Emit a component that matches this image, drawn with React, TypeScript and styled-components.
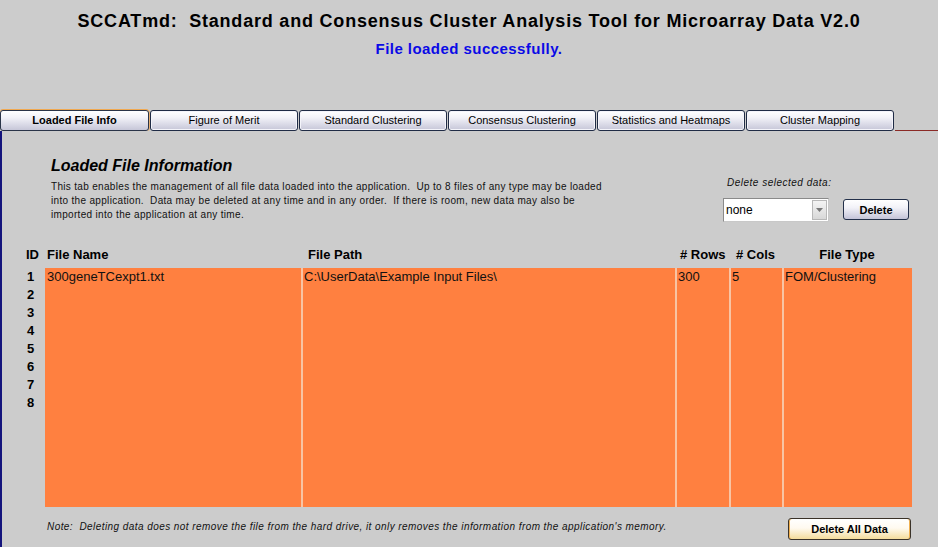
import React from "react";
import styled, { createGlobalStyle } from "styled-components";

const Global = createGlobalStyle`
  html, body { margin: 0; padding: 0; background: #cccccc; }
  body { font-family: "Liberation Sans", Arial, sans-serif; color: #000; }
  * { box-sizing: border-box; }
`;

const Page = styled.div`
  width: 938px;
  height: 547px;
  overflow: hidden;
  display: flex;
  flex-direction: column;
  background: #cccccc;
`;

const Header = styled.header`
  display: flex;
  flex-direction: column;
  align-items: center;
  padding-top: 10px;
  height: 110px;
`;

const Title = styled.h1`
  margin: 0;
  font-size: 18px;
  line-height: 22px;
  font-weight: bold;
  letter-spacing: 0.8px;
  white-space: pre;
`;

const Status = styled.div`
  margin-top: 7px;
  font-size: 15px;
  line-height: 19px;
  font-weight: bold;
  letter-spacing: 0.45px;
  color: #0a0ae6;
`;

const TabBar = styled.nav`
  display: flex;
  align-items: stretch;
  gap: 1px;
  height: 21px;
`;

const Tab = styled.div<{ $active?: boolean }>`
  width: ${(p) => (p.$active ? 149 : 148)}px;
  display: flex;
  align-items: center;
  justify-content: center;
  padding-bottom: 1px;
  font-size: 11px;
  font-weight: ${(p) => (p.$active ? "bold" : "normal")};
  border: 1px solid ${(p) => (p.$active ? "#2a3448" : "#1f2b45")};
  border-radius: 3px;
  background: linear-gradient(#ffffff 0%, #f2f2f8 35%, #c6c6d8 100%);
  box-shadow: ${(p) =>
    p.$active ? "0 -1px 0 0 #f0a850, 1px 0 0 0 #e8b070" : "inset 0 0 0 1px #f4f4fa"};
`;

const TabFiller = styled.div`
  flex: 1;
  border-bottom: 1px solid #8b2a26;
`;

const Panel = styled.main`
  flex: 1;
  border-left: 2px solid #14147c;
  display: flex;
  flex-direction: column;
  padding-top: 25px;
  padding-right: 27px;
`;

const TopSection = styled.section`
  display: flex;
  padding-left: 49px;
`;

const Intro = styled.div`
  display: flex;
  flex-direction: column;
`;

const Heading = styled.h2`
  margin: 0;
  font-size: 16px;
  line-height: 20px;
  font-weight: bold;
  font-style: italic;
`;

const Description = styled.p`
  margin: 4px 0 0 0;
  font-size: 10px;
  line-height: 14px;
  letter-spacing: 0.32px;
  white-space: pre;
  color: #111;
`;

const DeleteBox = styled.div`
  margin-left: auto;
  margin-right: 2px;
  display: flex;
  flex-direction: column;
  margin-top: 20px;
`;

const SmallLabel = styled.div`
  font-size: 10px;
  line-height: 14px;
  font-style: italic;
  letter-spacing: 0.5px;
  padding-left: 4px;
  color: #111;
`;

const Controls = styled.div`
  display: flex;
  align-items: flex-start;
  gap: 14px;
  margin-top: 8px;
`;

const Select = styled.div`
  width: 106px;
  height: 24px;
  background: #ffffff;
  border: 1px solid #8a8a8a;
  border-right-color: #c8c8c8;
  border-bottom-color: #c8c8c8;
  display: flex;
  align-items: stretch;
`;

const SelectValue = styled.div`
  flex: 1;
  font-size: 12px;
  line-height: 22px;
  padding-left: 2px;
`;

const SelectArrow = styled.div`
  width: 15px;
  margin: 1px;
  background: linear-gradient(#f4f4f4, #d8d8d8);
  border: 1px solid #b8b8b8;
  display: flex;
  align-items: center;
  justify-content: center;
`;

const Button = styled.button<{ $variant?: "warn" }>`
  font-family: "Liberation Sans", Arial, sans-serif;
  font-size: 11px;
  font-weight: bold;
  color: #000;
  padding: 0;
  border: 1px solid ${(p) => (p.$variant === "warn" ? "#3a3228" : "#23304a")};
  border-radius: 3px;
  background: ${(p) =>
    p.$variant === "warn"
      ? "linear-gradient(#ffffff 0%, #fffaf0 45%, #f4dc9c 100%)"
      : "linear-gradient(#ffffff 0%, #f2f2f8 40%, #c4c4d8 100%)"};
  box-shadow: ${(p) =>
    p.$variant === "warn" ? "inset 1px 0 0 #f0b050, inset -1px 0 0 #f0b050" : "none"};
`;

const DeleteButton = styled(Button)`
  width: 66px;
  height: 21px;
  margin-top: 1px;
`;

const DeleteAllButton = styled(Button)`
  width: 123px;
  height: 22px;
`;

const COLS = "19px 256px 374px 54px 53px 130px";

const TableHead = styled.div`
  display: grid;
  grid-template-columns: ${COLS};
  margin-left: 24px;
  margin-top: 25px;
  font-size: 13px;
  line-height: 16px;
  font-weight: bold;
`;

const HeadCell = styled.div<{ $pad?: number; $center?: boolean }>`
  padding-left: ${(p) => p.$pad ?? 0}px;
  text-align: ${(p) => (p.$center ? "center" : "left")};
  white-space: nowrap;
`;

const TableBody = styled.div`
  display: grid;
  grid-template-columns: ${COLS};
  margin-left: 24px;
  margin-top: 5px;
  height: 239px;
`;

const IdColumn = styled.div`
  display: flex;
  flex-direction: column;
  font-size: 13px;
  line-height: 18px;
  font-weight: bold;
  padding-left: 1px;
`;

const DataColumn = styled.div<{ $first?: boolean; $pad?: number }>`
  background: #ff8040;
  border-left: ${(p) => (p.$first ? "none" : "2px solid #f8c4a4")};
  font-size: 13px;
  line-height: 18px;
  padding-left: ${(p) => p.$pad ?? 1}px;
  white-space: nowrap;
  overflow: hidden;
  color: #111;
`;

const Footer = styled.footer`
  display: flex;
  justify-content: space-between;
  align-items: flex-start;
  margin-top: 11px;
  padding-left: 45px;
`;

const Note = styled.div`
  font-size: 10px;
  line-height: 14px;
  font-style: italic;
  letter-spacing: 0.43px;
  margin-top: 2px;
  white-space: pre;
  color: #111;
`;

const tabs = [
  "Loaded File Info",
  "Figure of Merit",
  "Standard Clustering",
  "Consensus Clustering",
  "Statistics and Heatmaps",
  "Cluster Mapping",
];

export default function App() {
  return (
    <Page>
      <Global />
      <Header>
        <Title>{"SCCATmd:  Standard and Consensus Cluster Analysis Tool for Microarray Data V2.0"}</Title>
        <Status>File loaded successfully.</Status>
      </Header>
      <TabBar>
        {tabs.map((t, i) => (
          <Tab key={t} $active={i === 0}>
            {t}
          </Tab>
        ))}
        <TabFiller />
      </TabBar>
      <Panel>
        <TopSection>
          <Intro>
            <Heading>Loaded File Information</Heading>
            <Description>
              {"This tab enables the management of all file data loaded into the application.  Up to 8 files of any type may be loaded\ninto the application.  Data may be deleted at any time and in any order.  If there is room, new data may also be\nimported into the application at any time."}
            </Description>
          </Intro>
          <DeleteBox>
            <SmallLabel>Delete selected data:</SmallLabel>
            <Controls>
              <Select>
                <SelectValue>none</SelectValue>
                <SelectArrow>
                  <svg width="7" height="4" viewBox="0 0 7 4">
                    <path d="M0 0 L7 0 L3.5 4 Z" fill="#777" />
                  </svg>
                </SelectArrow>
              </Select>
              <DeleteButton>Delete</DeleteButton>
            </Controls>
          </DeleteBox>
        </TopSection>

        <TableHead>
          <HeadCell>ID</HeadCell>
          <HeadCell $pad={2}>File Name</HeadCell>
          <HeadCell $pad={7}>File Path</HeadCell>
          <HeadCell $pad={5}># Rows</HeadCell>
          <HeadCell $pad={7}># Cols</HeadCell>
          <HeadCell $center>File Type</HeadCell>
        </TableHead>

        <TableBody>
          <IdColumn>
            {[1, 2, 3, 4, 5, 6, 7, 8].map((n) => (
              <div key={n}>{n}</div>
            ))}
          </IdColumn>
          <DataColumn $first $pad={2}>300geneTCexpt1.txt</DataColumn>
          <DataColumn>C:\UserData\Example Input Files\</DataColumn>
          <DataColumn>300</DataColumn>
          <DataColumn>5</DataColumn>
          <DataColumn>FOM/Clustering</DataColumn>
        </TableBody>

        <Footer>
          <Note>
            {"Note:  Deleting data does not remove the file from the hard drive, it only removes the information from the application's memory."}
          </Note>
          <DeleteAllButton $variant="warn">Delete All Data</DeleteAllButton>
        </Footer>
      </Panel>
    </Page>
  );
}
